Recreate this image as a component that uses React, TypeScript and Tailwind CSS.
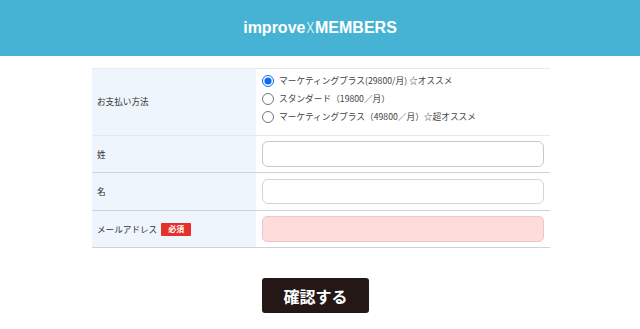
import React from "react";

const jp = { fontFamily: '"Noto Sans CJK JP", "Noto Sans", sans-serif' };

function Radio({ checked, label }: { checked?: boolean; label: string }) {
  return (
    <label className="flex items-center h-[18px] gap-[5px]">
      <input
        type="radio"
        name="plan"
        defaultChecked={checked}
        className="m-0 w-[12px] h-[12px] accent-[#0a6cf0]"
      />
      <span className="text-[8.7px] text-[#444] leading-none">{label}</span>
    </label>
  );
}

export default function App() {
  return (
    <div className="w-[640px] h-[329px] bg-white overflow-hidden" style={jp}>
      <header className="h-[56px] bg-[#46b3d5] flex items-center justify-center">
        <div
          className="text-white text-[16px] font-bold"
          style={{ fontFamily: '"Liberation Sans", Arial, sans-serif' }}
        >
          improve<span className="text-[14px] mx-[1px]" style={{ fontFamily: '"Noto Sans CJK JP", sans-serif', fontWeight: 300 }}>X</span>MEMBERS
        </div>
      </header>

      <div className="mt-[12px] ml-[92px] w-[458px] border-t border-[#e6eaee]">
        {/* row 1 */}
        <div className="flex h-[67px] border-b border-[#e6e9ec]">
          <div className="w-[164px] bg-[#eef5fc] flex items-center pl-[5px] pb-[2px] text-[8.6px] text-[#333]">
            お支払い方法
          </div>
          <div className="flex-1 flex flex-col justify-center pl-[6px] pb-[6px]">
            <Radio checked label="マーケティングプラス(29800/月) ☆オススメ" />
            <Radio label="スタンダード（19800／月）" />
            <Radio label="マーケティングプラス（49800／月）☆超オススメ" />
          </div>
        </div>
        {/* row 2 */}
        <div className="flex h-[37px] border-b border-[#cfd2d6]">
          <div className="w-[164px] bg-[#eef5fc] flex items-center pl-[5px] text-[8.6px] text-[#333]">
            姓
          </div>
          <div className="flex-1 flex items-center pl-[6px] pr-[6px]">
            <div className="w-full h-[26px] rounded-[6px] border border-[#c8c8c8] bg-white" />
          </div>
        </div>
        {/* row 3 */}
        <div className="flex h-[38px] border-b border-[#cfd2d6]">
          <div className="w-[164px] bg-[#eef5fc] flex items-center pl-[5px] text-[8.6px] text-[#333]">
            名
          </div>
          <div className="flex-1 flex items-center pl-[6px] pr-[6px]">
            <div className="w-full h-[25px] rounded-[6px] border border-[#d4d4d4] bg-white" />
          </div>
        </div>
        {/* row 4 */}
        <div className="flex h-[37px] border-b border-[#cfd2d6]">
          <div className="w-[164px] bg-[#eef5fc] flex items-center pl-[5px] text-[8.6px] text-[#333] gap-[4px]">
            メールアドレス
            <span className="bg-[#e4322b] text-white text-[8px] font-bold w-[30px] h-[13px] flex items-center justify-center rounded-[1px]">
              必須
            </span>
          </div>
          <div className="flex-1 flex items-center pl-[6px] pr-[6px]">
            <div className="w-full h-[26px] rounded-[5px] border border-[#ecc9c9] bg-[#ffdcdc]" />
          </div>
        </div>
      </div>

      <div className="flex justify-center mt-[30px]">
        <button className="mr-[9px] w-[107px] h-[35px] rounded-[3px] bg-[#231815] text-white text-[16px] font-bold">
          確認する
        </button>
      </div>
    </div>
  );
}
